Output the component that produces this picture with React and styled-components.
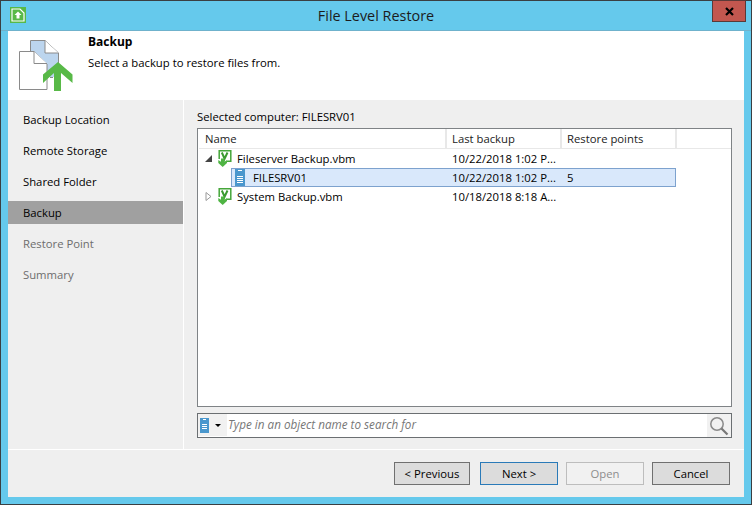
import React from "react";
import styled, { createGlobalStyle } from "styled-components";

const Global = createGlobalStyle`
  html, body { margin: 0; padding: 0; }
  body { width: 752px; height: 505px; overflow: hidden; background: #65c9ec; font-family: "Open Sans", "Noto Sans", sans-serif; font-size: 11.3px; color: #000; }
`;
const Window = styled.div`
  box-sizing: border-box; width: 752px; height: 505px; background: #65c9ec;
  border: 1px solid #3a3f42; display: flex; flex-direction: column; position: relative;
  padding: 0 7px 7px 7px;
`;
const TitleBar = styled.div`
  height: 30px; flex: none; display: flex; align-items: center; justify-content: center; font-size: 14.4px; color: #1c1c1c;
  position: relative; border-bottom: 1px solid #6fb2cc; box-sizing: border-box; margin: 0 -7px; padding-bottom: 1px;
`;
const AppIcon = styled.span`
  position: absolute; left: 9px; top: 6px; width: 16px; height: 16px; background: #58b947; display: flex;
  align-items: center; justify-content: center;
`;
const CloseButton = styled.span`
  position: absolute; right: 5px; top: -1px; width: 34px; height: 22px; box-sizing: border-box; background: #c2574f;
  border: 1px solid #5a3a38; display: flex; align-items: center; justify-content: center;
`;
const Content = styled.div`flex: 1; display: flex; flex-direction: column; min-height: 0; background: #efefef;`;
const Header = styled.header`
  height: 69px; flex: none; background: #fff; display: flex; padding: 0 0 0 11px; box-sizing: border-box;
`;
const HeaderArt = styled.div`width: 69px; flex: none; padding-top: 9px;`;
const HeaderText = styled.div`padding-top: 3px; display: flex; flex-direction: column; gap: 5px;`;
const HeaderTitle = styled.div`font-weight: 700; font-size: 12px; line-height: 16px;`;
const HeaderSub = styled.div`line-height: 16px;`;
const Body = styled.div`flex: 1; display: flex; min-height: 0;`;
const Sidebar = styled.nav`
  width: 175px; flex: none; border-right: 1px solid #fff; padding-top: 8px; display: flex; flex-direction: column;
`;
const Step = styled.div`
  height: 23px; line-height: 23px; margin-bottom: 8px; padding-left: 15px;
  background: ${p => p.$active ? "#a0a0a0" : "transparent"}; color: ${p => p.$muted ? "#6d6d6d" : "#000"};
`;
const Main = styled.main`flex: 1; display: flex; flex-direction: column; padding: 10px 12px 0 13px; min-width: 0;`;
const Caption = styled.div`height: 18px; line-height: 14px; flex: none;`;
const Tree = styled.div`
  height: 279px; box-sizing: border-box; flex: none; background: #fff; border: 1px solid #7f8386;
`;
const HeadRow = styled.div`display: flex; height: 20px; margin-left: 1px; border-bottom: 1px solid #e8e8e8; box-sizing: border-box;`;
const HeadCell = styled.div`
  width: ${p => p.$w}px; box-sizing: border-box; padding-left: ${p => p.$pad}px; line-height: 19px; border-right: 2px solid #e8e8e8; color: #222;
`;
const Row = styled.div`display: flex; height: 19px; align-items: center; position: relative;`;
const NameCell = styled.div`
  width: ${p => p.$w}px; flex: none; display: flex; align-items: center; white-space: nowrap; padding-left: ${p => p.$indent}px; box-sizing: border-box; height: 100%;
`;
const Cell = styled.div`width: ${p => p.$w}px; flex: none; white-space: nowrap; padding-left: 5px; box-sizing: border-box;`;
const Selected = styled.div`
  display: flex; align-items: center; height: 19px; margin-left: 33px; width: 445px; box-sizing: border-box;
  background: #d9e8fb; border: 1px solid #7da2ce;
`;
const Arrow = styled.span`width: 14px; flex: none; display: flex; justify-content: flex-start; padding-left: 1px; box-sizing: border-box;`;
const FileIcon = styled.span`width: ${p => p.$w}px; flex: none; display: flex;`;
const SearchBox = styled.div`
  margin-top: 6px; height: 25px; box-sizing: border-box; flex: none; background: #fff; border: 1px solid #6b6f72; display: flex; align-items: stretch;
`;
const Scope = styled.div`
  width: 29px; flex: none; background: #f1f1f1; display: flex; align-items: center; padding-left: 2px; box-sizing: border-box; gap: 6px; margin: 0 0 1px 0;
`;
const Caret = styled.span`width: 0; height: 0; border-left: 3px solid transparent; border-right: 3px solid transparent; border-top: 3px solid #000;`;
const SearchInput = styled.div`flex: 1; font-style: italic; font-size: 11.7px; color: #777; padding-left: 1px; line-height: 20px;`;
const SearchBtn = styled.div`width: 24px; flex: none; background: #f1f1f1; display: flex; align-items: center; justify-content: center;`;
const Footer = styled.footer`
  height: 48px; flex: none; border-top: 1px solid #fff; display: flex; align-items: flex-start; padding: 12px 14px 0 0; justify-content: flex-end; box-sizing: border-box;
`;
const Btn = styled.div`
  box-sizing: border-box; width: ${p => p.$w || 78}px; height: 23px; line-height: 21px; text-align: center; margin-left: ${p => p.$gap || 0}px;
  background: ${p => p.$disabled ? "#f1f1f1" : "#dcdcdc"}; color: ${p => p.$disabled ? "#8d8d8d" : "#000"};
  border: 1px solid ${p => p.$primary ? "#2a7ab8" : p.$disabled ? "#bdbdbd" : "#707070"};
`;

const VbmIcon = () => (
  <svg width="14" height="17" viewBox="0 0 14 17">
    <path d="M1.200 9V.8h11.600v10.400H9" fill="none" stroke="#45a63a" strokeWidth="1.500" />
    <path d="M3.800 2.500l2.500 5.500M9.500 2.500L5 12" fill="none" stroke="#3a9a30" strokeWidth="2" />
    <path d="M.3 10l2.700 1.800V8.500h3.500v3.300L9 10v3L4.700 17 .3 13z" fill="#4fb443" />
  </svg>
);
const ServerIcon = ({ w = 10, h = 17 }) => (
  <svg width={w} height={h} viewBox="0 0 10 17" shapeRendering="crispEdges">
    <rect width="10" height="17" fill="#4a97cd" />
    <rect x="3" y="1" width="4" height="1" fill="#fff" />
    <rect x="2" y="7" width="6" height="1" fill="#fff" />
    <rect x="2" y="9" width="6" height="1" fill="#fff" />
    <rect x="2" y="11" width="6" height="1" fill="#fff" />
    <rect x="2" y="13" width="6" height="1" fill="#fff" />
  </svg>
);
const HeaderIcon = () => (
  <svg width="54" height="52" viewBox="0 0 54 52">
    <path d="M11.500.5H26L39.500 13v24H11.500z" fill="#bcd5ee" />
    <path d="M15 11.500H11.500V.5H26L39.500 13v10M31 37.500h3" fill="none" stroke="#8a8a8a" />
    <path d="M26 .5v12.500h13.500" fill="#fff" stroke="#8a8a8a" />
    <path d="M.5 11.500H15L28 24v25.500H.5z" fill="#fff" stroke="#8a8a8a" />
    <path d="M15 11.500V23.500h13" fill="#fff" stroke="#8a8a8a" />
    <path d="M39 22l14.500 12.500V43L42 33v18h-7V33L24 43v-8.500z" fill="#58b947" />
  </svg>
);

export default function App() {
  return (
    <Window>
      <Global />
      <TitleBar>
        <AppIcon>
          <svg width="14" height="14" viewBox="0 0 14 14">
            <path d="M1 1h8l4 4v8H1z" fill="#58b947" stroke="#fff" strokeWidth="1.200" />
            <path d="M7 3.500l3.500 3.500H8.500v3.500h-3V7H3.500z" fill="#fff" />
          </svg>
        </AppIcon>
        File Level Restore
        <CloseButton>
          <svg width="9" height="9" viewBox="0 0 9 9"><path d="M1 1l7 7M8 1L1 8" stroke="#000" strokeWidth="2.200" /></svg>
        </CloseButton>
      </TitleBar>
      <Content>
        <Header>
          <HeaderArt><HeaderIcon /></HeaderArt>
          <HeaderText>
            <HeaderTitle>Backup</HeaderTitle>
            <HeaderSub>Select a backup to restore files from.</HeaderSub>
          </HeaderText>
        </Header>
        <Body>
          <Sidebar>
            <Step>Backup Location</Step>
            <Step>Remote Storage</Step>
            <Step>Shared Folder</Step>
            <Step $active>Backup</Step>
            <Step $muted>Restore Point</Step>
            <Step $muted>Summary</Step>
          </Sidebar>
          <Main>
            <Caption>Selected computer: FILESRV01</Caption>
            <Tree>
              <HeadRow>
                <HeadCell $w={248} $pad={6}>Name</HeadCell>
                <HeadCell $w={115} $pad={5}>Last backup</HeadCell>
                <HeadCell $w={115} $pad={5}>Restore points</HeadCell>
              </HeadRow>
              <Row>
                <NameCell $w={249} $indent={6}>
                  <Arrow><svg width="7" height="7" viewBox="0 0 7 7"><path d="M7 0v7H0z" fill="#444" /></svg></Arrow>
                  <FileIcon $w={19}><VbmIcon /></FileIcon>
                  Fileserver Backup.vbm
                </NameCell>
                <Cell $w={115}>10/22/2018 1:02 P...</Cell>
              </Row>
              <Selected>
                <NameCell $w={215} $indent={3}>
                  <FileIcon $w={18}><ServerIcon /></FileIcon>
                  FILESRV01
                </NameCell>
                <Cell $w={115}>10/22/2018 1:02 P...</Cell>
                <Cell $w={110}>5</Cell>
              </Selected>
              <Row>
                <NameCell $w={249} $indent={6}>
                  <Arrow><svg width="7" height="9" viewBox="0 0 7 9"><path d="M1 .5l5 4-5 4z" fill="#fff" stroke="#999" /></svg></Arrow>
                  <FileIcon $w={19}><VbmIcon /></FileIcon>
                  System Backup.vbm
                </NameCell>
                <Cell $w={115}>10/18/2018 8:18 A...</Cell>
              </Row>
            </Tree>
            <SearchBox>
              <Scope><ServerIcon w={9} h={17} /><Caret /></Scope>
              <SearchInput>Type in an object name to search for</SearchInput>
              <SearchBtn>
                <svg width="20" height="20" viewBox="0 0 20 20">
                  <circle cx="8" cy="8" r="6.200" fill="none" stroke="#8a8a8a" strokeWidth="1.500" />
                  <path d="M12.500 12.500l6 6" stroke="#777" strokeWidth="2.200" />
                </svg>
              </SearchBtn>
            </SearchBox>
          </Main>
        </Body>
        <Footer>
          <Btn $w={76}>&lt; Previous</Btn>
          <Btn $primary $gap={10}>Next &gt;</Btn>
          <Btn $disabled $gap={8}>Open</Btn>
          <Btn $gap={8}>Cancel</Btn>
        </Footer>
      </Content>
    </Window>
  );
}
